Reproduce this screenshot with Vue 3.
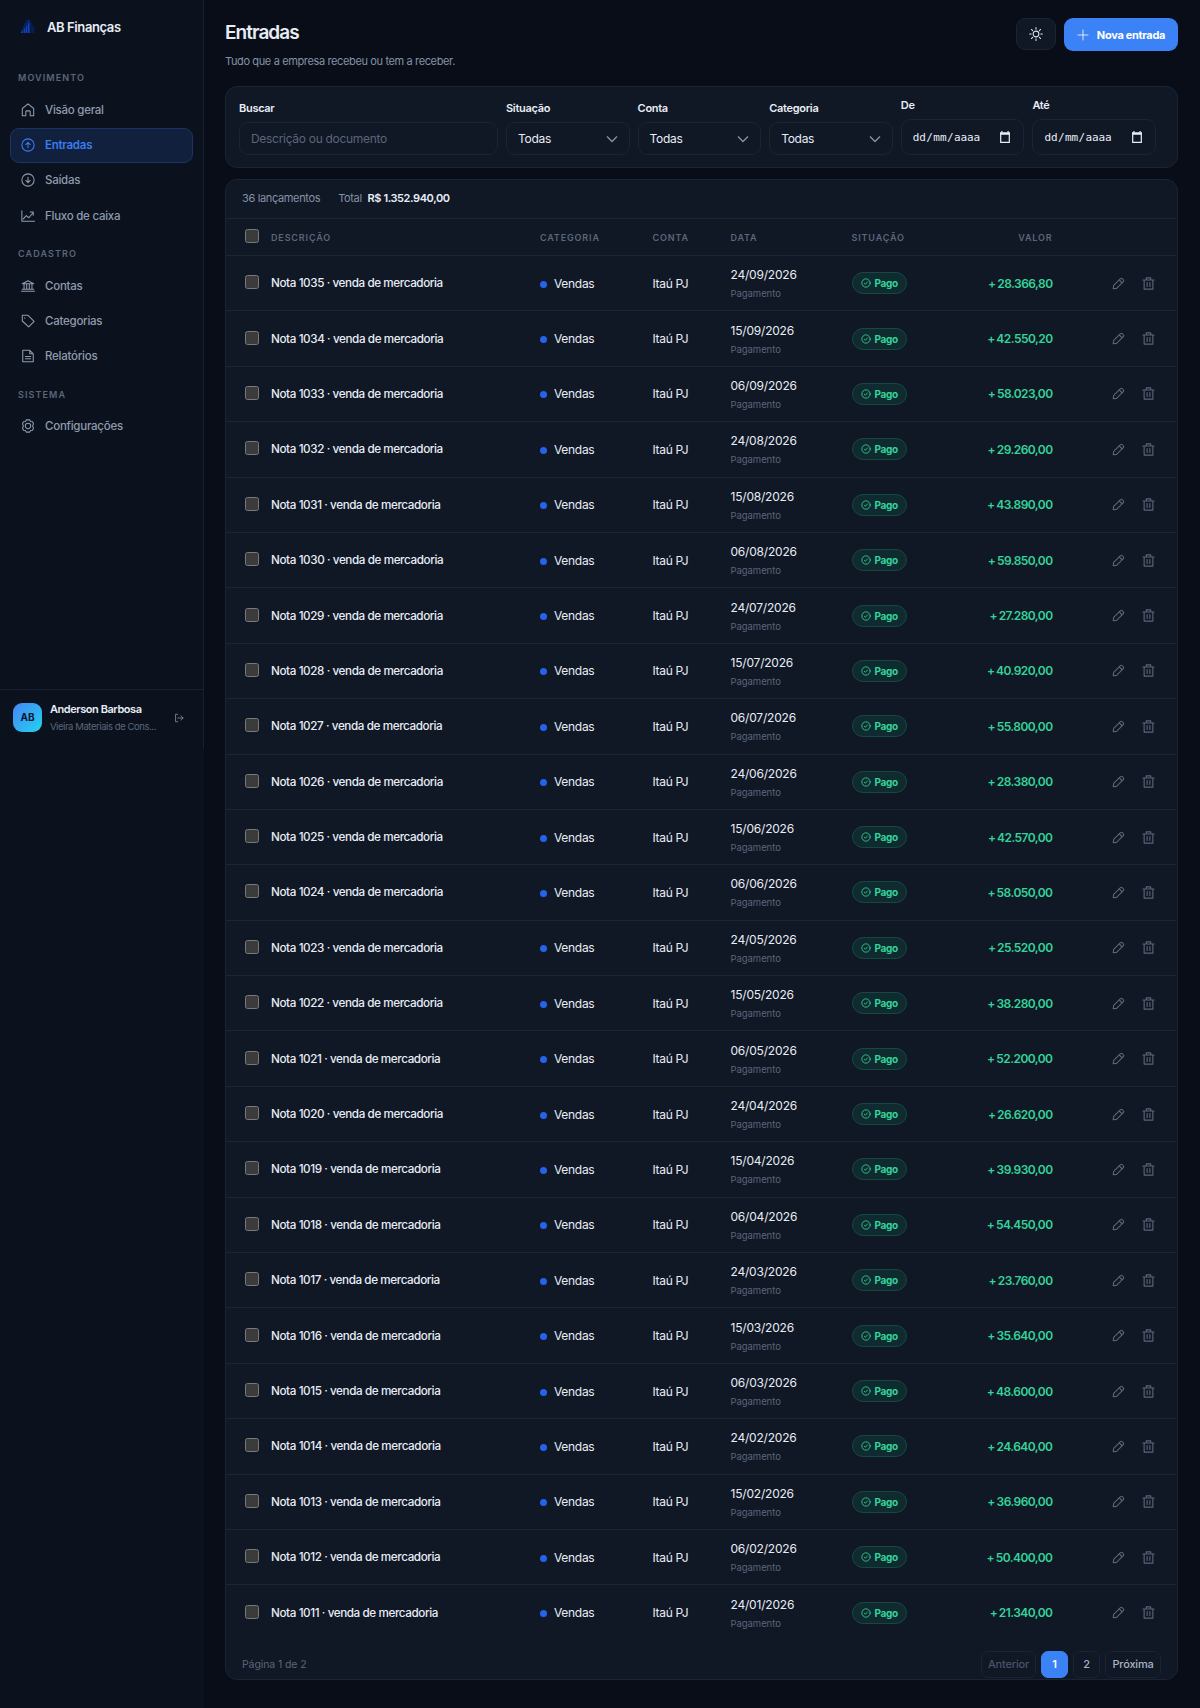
<template>
  <div class="app">
    <aside class="sidebar">
      <div class="sidebar-inner">
        <div class="brand">
          <svg class="brand-logo" viewBox="0 0 18 16">
            <path d="M1 14L7.500 1H11v13H1z" fill="#06257a" opacity=".8" />
            <path d="M2 14L10.500 3v11H2z" fill="#1150c8" opacity=".8" />
            <path d="M11.500 3l2 1v3l2 1v6h-4z" fill="#061f5e" opacity=".8" />
            <path d="M4.500 14v-4M6.500 14V7M8.500 14V5" stroke="#06143a" stroke-width=".6" />
          </svg>
          <span>AB Finanças</span>
        </div>

        <nav>
          <template v-for="group in menu" :key="group.title">
            <h4>{{ group.title }}</h4>
            <a v-for="item in group.items" :key="item.label" :class="{ active: item.label === current }" @click="current = item.label">
              <svg class="icon" viewBox="0 0 16 16"><path :d="item.icon" /></svg>
              <span>{{ item.label }}</span>
            </a>
          </template>
        </nav>

        <div class="user">
          <div class="avatar">AB</div>
          <div class="user-info">
            <strong>Anderson Barbosa</strong>
            <span>Vieira Materiais de Cons...</span>
          </div>
          <svg class="icon logout" viewBox="0 0 16 16"><path d="M6 2H2.500v12H6M6 8h8.500M11 4.500L14.500 8 11 11.500" /></svg>
        </div>
      </div>
    </aside>

    <main>
      <header>
        <div>
          <h1>Entradas</h1>
          <p>Tudo que a empresa recebeu ou tem a receber.</p>
        </div>
        <div class="header-actions">
          <button class="theme">
            <svg class="icon" viewBox="0 0 16 16">
              <circle cx="8" cy="8" r="3.300" />
              <path d="M8 .7v1.900M8 13.400v1.900M.7 8h1.900M13.400 8h1.900M2.800 2.800l1.300 1.300M11.900 11.900l1.300 1.300M2.800 13.200l1.300-1.300M11.900 4.100l1.300-1.300" />
            </svg>
          </button>
          <button class="new">
            <svg class="icon" viewBox="0 0 12 12"><path d="M6 1v10M1 6h10" /></svg>
            <span>Nova entrada</span>
          </button>
        </div>
      </header>

      <!-- Filters -->
      <section class="card filters">
        <label class="field search">
          <span>Buscar</span>
          <input v-model="search" placeholder="Descrição ou documento" />
        </label>
        <label v-for="f in ['Situação', 'Conta', 'Categoria']" :key="f" class="field">
          <span>{{ f }}</span>
          <div class="control">
            Todas
            <svg class="chevron" viewBox="0 0 12 8"><path d="M1 1.500L6 6.500l5-5" /></svg>
          </div>
        </label>
        <label v-for="f in ['De', 'Até']" :key="f" class="field date">
          <span>{{ f }}</span>
          <div class="control">
            <div class="mask"><b>dd</b><i>/</i><b>mm</b><i>/</i><b>aaaa</b></div>
            <svg class="calendar" viewBox="0 0 10 12"><path d="M.7 2.500h8.600v8.800H.7z" /><path class="top" d="M0 1.200h1.300V0h1.200v1.200h5V0h1.200v1.200H10v2.500H0z" /></svg>
          </div>
        </label>
      </section>

      <!-- Table -->
      <section class="card list">
        <div class="summary">
          <span>36 lançamentos</span>
          <span class="total">Total <strong>R$ 1.352.940,00</strong></span>
        </div>
        <table>
          <colgroup>
            <col class="c-check" /><col class="c-desc" /><col class="c-cat" /><col class="c-conta" />
            <col class="c-data" /><col class="c-sit" /><col class="c-valor" /><col />
          </colgroup>
          <thead>
            <tr>
              <th class="check"><input type="checkbox" /></th>
              <th>Descrição</th>
              <th>Categoria</th>
              <th>Conta</th>
              <th>Data</th>
              <th>Situação</th>
              <th class="right">Valor</th>
              <th></th>
            </tr>
          </thead>
          <tbody>
            <tr v-for="row in rows" :key="row.numero">
              <td class="check"><input type="checkbox" /></td>
              <td class="desc">Nota {{ row.numero }} · venda de mercadoria</td>
              <td><span class="dot"></span>Vendas</td>
              <td class="conta">Itaú PJ</td>
              <td class="data">
                <div>{{ row.data }}</div>
                <small>Pagamento</small>
              </td>
              <td>
                <span class="badge">
                  <svg class="icon" viewBox="0 0 12 12"><circle cx="6" cy="6" r="5" /><path d="M4 6.300l1.300 1.200 2.500-2.800" /></svg>
                  Pago
                </span>
              </td>
              <td class="right valor">+ {{ row.valor }}</td>
              <td>
                <div class="actions">
                  <svg class="icon" viewBox="0 0 14 14"><path d="M1.300 12.700l.5-3.600 7.300-7.300a1.300 1.300 0 0 1 1.900 0l1.200 1.200a1.300 1.300 0 0 1 0 1.900L4.900 12.200zM7.800 3.200l3 3" /></svg>
                  <svg class="icon" viewBox="0 0 14 14"><path d="M1 3.200h12M4.600 3V1h4.800v2M2.300 3.200V13h9.400V3.200M5.500 6v4.300M8.500 6v4.300" /></svg>
                </div>
              </td>
            </tr>
          </tbody>
        </table>
        <div class="pager">
          <span>Página 1 de 2</span>
          <div class="pages">
            <button class="prev" disabled>Anterior</button>
            <button class="on">1</button>
            <button>2</button>
            <button class="next">Próxima</button>
          </div>
        </div>
      </section>
    </main>
  </div>
</template>

<script setup>
import { ref } from 'vue';

const search = ref('');
const current = ref('Entradas');

const menu = [
  {
    title: 'Movimento',
    items: [
      { label: 'Visão geral', icon: 'M1.500 14.500V6.300L8 1l6.500 5.300v8.200h-4V10a1 1 0 0 0-1-1h-3a1 1 0 0 0-1 1v4.500z' },
      { label: 'Entradas', icon: 'M8 1a7 7 0 1 0 0 14A7 7 0 0 0 8 1zM8 11V5M5.500 7.500L8 5l2.500 2.500' },
      { label: 'Saídas', icon: 'M8 1a7 7 0 1 0 0 14A7 7 0 0 0 8 1zM8 5v6M5.500 8.500L8 11l2.500-2.500' },
      { label: 'Fluxo de caixa', icon: 'M1 2v12h14.500M2.500 11.500l3.500-4 3 2.500 5-6M10.500 3.500H14V7' }
    ]
  },
  {
    title: 'Cadastro',
    items: [
      { label: 'Contas', icon: 'M.5 14h15M1.500 11.800h13M1.500 5.500h13L8 2zM3.500 6v5.500M6.500 6v5.500M9.500 6v5.500M12.500 6v5.500' },
      { label: 'Categorias', icon: 'M1.500 1.500H8l7 7L8.800 14.700 1.500 8zM4.300 4.200v.6' },
      { label: 'Relatórios', icon: 'M2 1.500h8l4 4v9H2zM10 1.500v4h4M5 8.500h6M5 11.200h6' }
    ]
  },
  {
    title: 'Sistema',
    items: [
      { label: 'Configurações', icon: 'M6 1h4l.9 1.900 2.300.3 1 2.300-.9 2.500.9 2.500-1 2.300-2.300.3L10 15H6l-.9-1.900-2.300-.3-1-2.300.9-2.500-.9-2.500 1-2.300 2.300-.3zM8 4.900a3.100 3.100 0 1 0 0 6.200 3.100 3.100 0 0 0 0-6.200z' }
    ]
  }
];

const valores = [
  '28.366,80', '42.550,20', '58.023,00', '29.260,00', '43.890,00', '59.850,00', '27.280,00', '40.920,00', '55.800,00',
  '28.380,00', '42.570,00', '58.050,00', '25.520,00', '38.280,00', '52.200,00', '26.620,00', '39.930,00', '54.450,00',
  '23.760,00', '35.640,00', '48.600,00', '24.640,00', '36.960,00', '50.400,00', '21.340,00'
];

// three invoices per month, newest first
const dias = ['24', '15', '06'];
const rows = valores.map((valor, i) => ({
  numero: 1035 - i,
  data: `${dias[i % 3]}/0${9 - Math.floor(i / 3)}/2026`,
  valor
}));
</script>

<style>
body {
  margin: 0;
  background: #080d18;
}
</style>

<style scoped>
.app {
  display: flex;
  height: 1708px;
  box-sizing: border-box;
  font-family: Inter, "Liberation Sans", sans-serif;
  font-size: 12px;
  color: #e8edf5;
  background: #080d18;
}

.icon {
  fill: none;
  stroke: currentColor;
  stroke-width: 1.2;
  stroke-linecap: round;
  stroke-linejoin: round;
  flex: none;
}

.sidebar {
  width: 204px;
  flex: none;
  background: #0b121e;
}

.sidebar-inner {
  height: 749px;
  box-sizing: border-box;
  border-right: 1px solid #182130;
  display: flex;
  flex-direction: column;
}

.brand {
  display: flex;
  align-items: center;
  gap: 10px;
  height: 54px;
  padding-left: 19px;
  font-size: 13px;
  font-weight: 600;
  letter-spacing: -0.4px;
}

.brand-logo {
  width: 18px;
  height: 16px;
}

nav {
  flex: 1;
  padding: 0 10px;
}

nav h4 {
  margin: 0;
  height: 38.4px;
  line-height: 48px;
  padding-left: 8px;
  font-size: 9px;
  font-weight: 600;
  letter-spacing: 1.1px;
  text-transform: uppercase;
  color: #5b6679;
}

nav h4:not(:first-child) {
  height: 35px;
  line-height: 41px;
}

nav a {
  display: flex;
  align-items: center;
  gap: 10px;
  height: 35.2px;
  box-sizing: border-box;
  padding-left: 10px;
  border: 1px solid transparent;
  border-radius: 9px;
  font-size: 11.5px;
  font-weight: 500;
  letter-spacing: -0.25px;
  color: #8f9bad;
}

nav a .icon {
  width: 14px;
  height: 14px;
}

nav a.active {
  color: #3b7cf0;
  background: #11203d;
  border-color: #1a3463;
  font-weight: 600;
}

.user {
  display: flex;
  align-items: center;
  height: 60px;
  box-sizing: border-box;
  padding: 0 19px 4px 13px;
  border-top: 1px solid #182130;
}

.avatar {
  width: 29px;
  height: 29px;
  line-height: 29px;
  border-radius: 9px;
  background: linear-gradient(135deg, #4585f6, #22d3ee);
  color: #0a1730;
  font-size: 10px;
  font-weight: 700;
  text-align: center;
}

.user-info {
  flex: 1;
  padding-left: 8px;
  white-space: nowrap;
}

.user-info strong,
.user-info span {
  display: block;
  line-height: 18px;
}

.user-info strong {
  font-size: 11px;
  font-weight: 600;
  letter-spacing: -0.45px;
}

.user-info span {
  font-size: 9.5px;
  letter-spacing: -0.43px;
  color: #5b6679;
}

.logout {
  width: 10px;
  height: 10px;
  color: #8f9bad;
}

main {
  flex: 1;
  padding: 0 22px 0 21px;
}

header {
  display: flex;
  justify-content: space-between;
  height: 86px;
}

h1 {
  margin: 20px 0 0;
  line-height: 25px;
  font-size: 19px;
  font-weight: 600;
  letter-spacing: -0.95px;
}

header p {
  margin: 7px 0 0;
  line-height: 18px;
  font-size: 11px;
  color: #8492a6;
  letter-spacing: -0.37px;
}

.header-actions {
  display: flex;
  gap: 8px;
  padding-top: 18px;
}

button {
  font-family: inherit;
}

.theme {
  width: 40px;
  height: 32px;
  padding: 0;
  display: flex;
  align-items: center;
  justify-content: center;
  background: #101725;
  border: 1px solid #1b2433;
  border-radius: 9px;
  color: #dce3ee;
}

.theme .icon {
  width: 14px;
  height: 14px;
}

.new {
  width: 114px;
  height: 33px;
  padding: 0;
  display: flex;
  align-items: center;
  justify-content: center;
  gap: 8px;
  border: none;
  border-radius: 9px;
  background: #3b82f6;
  color: #fff;
  font-size: 11px;
  font-weight: 700;
  letter-spacing: -0.3px;
}

.new .icon {
  width: 12px;
  height: 12px;
  stroke-width: 0.8;
}

.card {
  background: #101725;
  border: 1px solid #1b2433;
  border-radius: 12px;
  box-sizing: border-box;
}

.filters {
  display: grid;
  grid-template-columns: 259px repeat(5, 123.6px);
  column-gap: 8px;
  height: 82px;
  padding: 12px 13px;
}

.field > span {
  display: block;
  height: 18px;
  line-height: 18px;
  margin-bottom: 5px;
  font-size: 11px;
  font-weight: 600;
  letter-spacing: -0.3px;
}

.field input,
.control {
  display: flex;
  align-items: center;
  justify-content: space-between;
  width: 100%;
  height: 33px;
  box-sizing: border-box;
  padding: 0 11px;
  border: 1px solid #1b2433;
  border-radius: 9px;
  background: #101725;
  color: #e8edf5;
  font: 12px Inter, sans-serif;
  letter-spacing: -0.3px;
}

.field input::placeholder {
  color: #5b6679;
  opacity: 1;
}

.date {
  margin-top: -3px;
}

.date .control {
  height: 36px;
  padding-right: 13px;
}

.mask {
  display: flex;
  font-family: "DejaVu Sans Mono", monospace;
  font-size: 11px;
  letter-spacing: -0.1px;
}

.mask b,
.mask i {
  font-weight: 400;
  font-style: normal;
}

.mask i {
  padding: 0 0.5px;
}

.chevron {
  width: 12px;
  height: 8px;
  fill: none;
  stroke: #8492a6;
  stroke-width: 1.4;
}

.calendar {
  width: 10px;
  height: 12px;
  fill: none;
  stroke: #e8edf5;
  stroke-width: 1.2;
}

.calendar .top {
  fill: #e8edf5;
  stroke: none;
}

.list {
  margin-top: 11px;
  height: 1501px;
  overflow: hidden;
}

.summary {
  display: flex;
  align-items: center;
  gap: 18px;
  height: 39px;
  box-sizing: border-box;
  padding: 0 16px 3px;
  border-bottom: 1px solid #1b2433;
  font-size: 11px;
  letter-spacing: -0.35px;
  color: #8492a6;
}

.summary strong {
  margin-left: 3px;
  font-weight: 600;
  letter-spacing: -0.4px;
  color: #e8edf5;
}

table {
  width: 100%;
  table-layout: fixed;
  border-collapse: separate;
  border-spacing: 0;
}

.c-check { width: 45px; }
.c-desc { width: 269px; }
.c-cat { width: 112.5px; }
.c-conta { width: 78px; }
.c-data { width: 121px; }
.c-sit { width: 98px; }
.c-valor { width: 103px; }

th {
  height: 37px;
  padding: 0;
  box-sizing: border-box;
  border-bottom: 1px solid #1b2433;
  text-align: left;
  font-size: 9px;
  font-weight: 600;
  letter-spacing: 0.85px;
  text-transform: uppercase;
  color: #5b6679;
}

td {
  height: 55.4px;
  padding: 0;
  box-sizing: border-box;
  border-bottom: 1px solid #1b2433;
  letter-spacing: -0.3px;
  white-space: nowrap;
}

tbody tr:last-child td {
  border-bottom-color: transparent;
}

.right {
  text-align: right;
}

.check {
  padding-left: 19px;
}

.check input {
  appearance: none;
  display: block;
  width: 14px;
  height: 14px;
  margin: 0 0 2px;
  border: 1px solid #77797d;
  border-radius: 2.5px;
  background: #3b3b3b;
}

.desc {
  font-weight: 500;
  font-size: 11.7px;
  letter-spacing: -0.41px;
}

.dot {
  display: inline-block;
  width: 7px;
  height: 7px;
  margin-right: 7px;
  border-radius: 50%;
  background: #2563eb;
}

.data div {
  line-height: 18px;
  padding-top: 1px;
  letter-spacing: -0.2px;
}

.data small {
  display: block;
  line-height: 15px;
  margin-top: 2px;
  font-size: 9.5px;
  letter-spacing: -0.05px;
  color: #5b6679;
}

.badge {
  display: inline-flex;
  align-items: center;
  gap: 4px;
  width: 55px;
  height: 22px;
  box-sizing: border-box;
  padding-left: 8px;
  border: 1px solid #15493f;
  border-radius: 11px;
  background: #102b30;
  color: #34d399;
  font-size: 10px;
  font-weight: 700;
}

.badge .icon {
  width: 10px;
  height: 10px;
  stroke-width: 1;
}

.valor {
  color: #34d399;
  font-weight: 600;
  letter-spacing: -0.55px;
  word-spacing: -0.8px;
}

.actions {
  display: flex;
  justify-content: flex-end;
  gap: 17px;
  padding-right: 22px;
  color: #5b6679;
}

.actions .icon {
  width: 13px;
  height: 13px;
}

.pager {
  display: flex;
  justify-content: space-between;
  align-items: center;
  padding: 10px 16px 0;
  font-size: 10.5px;
  letter-spacing: -0.1px;
  color: #5b6679;
}

.pages {
  display: flex;
  gap: 5px;
}

.pages button {
  width: 27px;
  height: 27px;
  padding: 0;
  border: 1px solid #1b2433;
  border-radius: 7px;
  background: #101725;
  color: #a9b4c4;
  font-size: 11px;
  font-weight: 500;
  letter-spacing: -0.2px;
}

.pages .prev {
  width: 55px;
  color: #48546a;
}

.pages .next {
  width: 56px;
}

.pages .on {
  background: #3b82f6;
  border-color: #3b82f6;
  color: #fff;
  font-weight: 600;
}
</style>
